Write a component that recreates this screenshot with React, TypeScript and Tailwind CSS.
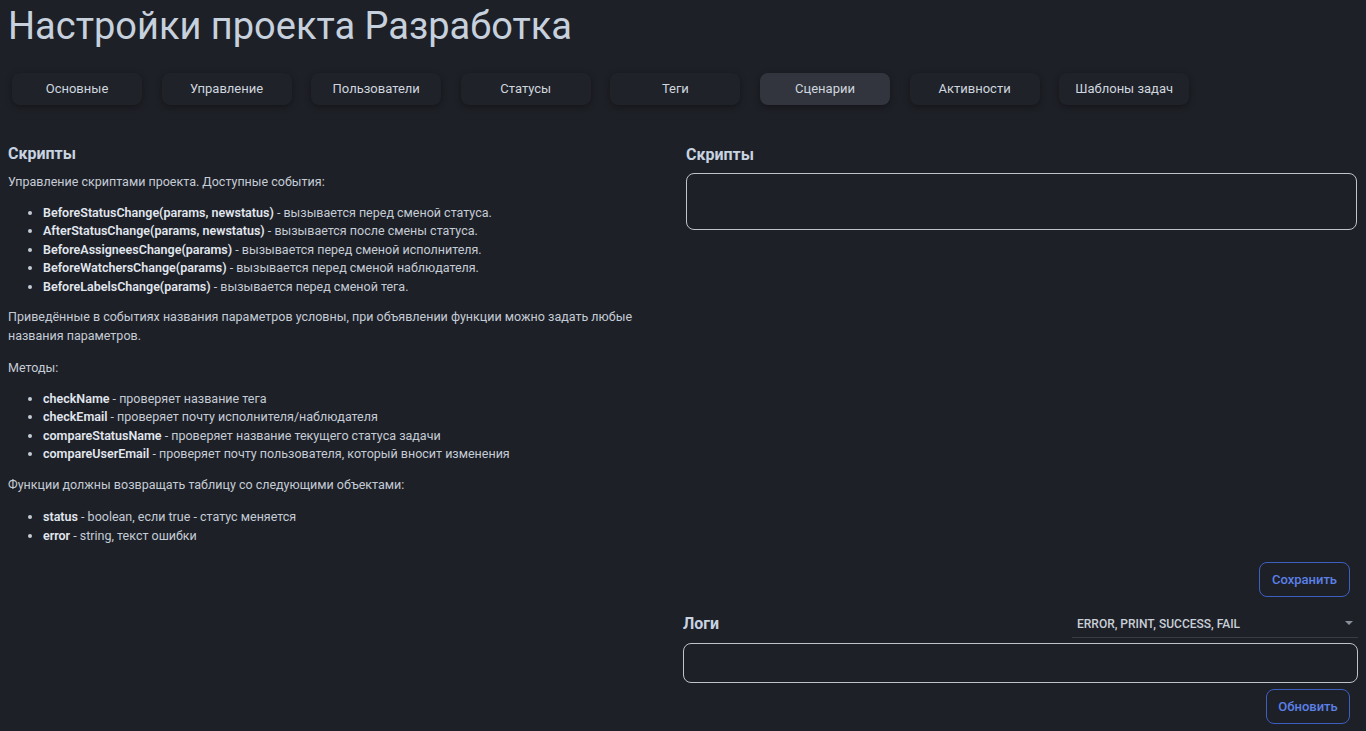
const tabs = [
  "Основные",
  "Управление",
  "Пользователи",
  "Статусы",
  "Теги",
  "Сценарии",
  "Активности",
  "Шаблоны задач",
];

const events = [
  ["BeforeStatusChange(params, newstatus)", "вызывается перед сменой статуса."],
  ["AfterStatusChange(params, newstatus)", "вызывается после смены статуса."],
  ["BeforeAssigneesChange(params)", "вызывается перед сменой исполнителя."],
  ["BeforeWatchersChange(params)", "вызывается перед сменой наблюдателя."],
  ["BeforeLabelsChange(params)", "вызывается перед сменой тега."],
];

const methods = [
  ["checkName", "проверяет название тега"],
  ["checkEmail", "проверяет почту исполнителя/наблюдателя"],
  ["compareStatusName", "проверяет название текущего статуса задачи"],
  ["compareUserEmail", "проверяет почту пользователя, который вносит изменения"],
];

const results = [
  ["status", "boolean, если true - статус меняется"],
  ["error", "string, текст ошибки"],
];

function List({ items }: { items: string[][] }) {
  return (
    <ul className="list-disc pl-[35px] my-3">
      {items.map(([name, text]) => (
        <li key={name} className="leading-[18.5px] marker:text-[#c4ccd6]">
          <span className="font-semibold text-[#e1e7ef]">{name}</span> - {text}
        </li>
      ))}
    </ul>
  );
}

export default function App() {
  return (
    <div className="min-h-screen bg-[#1e2027] px-2 font-['Roboto',sans-serif] text-[#c4ccd6]">
      <h1 className="text-[38px] leading-[52px] text-[#c6d1dd]">Настройки проекта Разработка</h1>

      {/* tabs */}
      <div className="flex gap-[19.6px] pl-1 mt-[21px]">
        {tabs.map((tab) => (
          <button
            key={tab}
            className={
              "w-[130px] h-8 rounded-lg text-[13px] text-[#cfd6df] shadow-[0_2px_6px_rgba(0,0,0,0.35)] " +
              (tab === "Сценарии" ? "bg-[#32353d]" : "bg-[#1f2229]")
            }
          >
            {tab}
          </button>
        ))}
      </div>

      <div className="grid grid-cols-2 mt-[39px]">
        {/* description */}
        <div className="text-[12.5px]">
          <h2 className="text-[16px] font-bold text-[#c7d3e0] leading-5">Скрипты</h2>
          <p className="mt-[9px] leading-[18.5px]">Управление скриптами проекта. Доступные события:</p>
          <List items={events} />
          <p className="leading-[18.5px] pr-4">
            Приведённые в событиях названия параметров условны, при объявлении функции можно задать любые
            названия параметров.
          </p>
          <p className="mt-[14px] leading-[18.5px]">Методы:</p>
          <List items={methods} />
          <p className="leading-[18.5px]">Функции должны возвращать таблицу со следующими объектами:</p>
          <div className="pt-[2px]">
            <List items={results} />
          </div>
        </div>

        {/* editor */}
        <div className="flex flex-col">
          <div className="pl-[3px] pr-px pt-px">
            <h2 className="text-[16px] font-bold text-[#c7d3e0] leading-5">Скрипты</h2>
            <textarea className="mt-2 block w-full h-[57px] rounded-lg border border-[#bfc4cb] bg-transparent resize-none outline-none" />
          </div>
          <div className="flex justify-end pr-2 mt-[332px]">
            <button className="h-[35px] w-[91px] rounded-lg border border-[#3d5fbf] text-[13px] font-medium text-[#5b80e8]">
              Сохранить
            </button>
          </div>

          <div className="flex items-center justify-between mt-[13px]">
            <h2 className="text-[16px] font-bold text-[#c7d3e0] leading-5">Логи</h2>
            <div className="w-[286px] h-7 flex items-center justify-between border-b border-[#393c44] pl-[5px] pr-[5px]">
              <span className="text-[12px] font-medium text-[#c8cfd8]">ERROR, PRINT, SUCCESS, FAIL</span>
              <svg width="8" height="5" viewBox="0 0 8 5">
                <path d="M0 0 L8 0 L4 4 Z" fill="#8a909a" />
              </svg>
            </div>
          </div>
          <textarea className="mt-[5px] block w-[675px] h-10 rounded-lg border border-[#bfc4cb] bg-transparent resize-none outline-none" />
          <div className="flex justify-end pr-2 mt-[6px]">
            <button className="h-[35px] w-[84px] rounded-lg border border-[#3d5fbf] text-[13px] font-medium text-[#5b80e8]">
              Обновить
            </button>
          </div>
        </div>
      </div>
    </div>
  );
}
